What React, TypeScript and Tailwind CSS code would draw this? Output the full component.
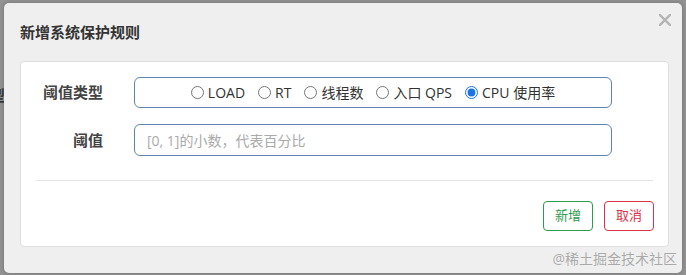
import React, { useState } from 'react';

const options = ['LOAD', 'RT', '线程数', '入口 QPS', 'CPU 使用率'];

export default function App() {
  const [grade, setGrade] = useState(4);

  return (
    <div
      className="relative w-[686px] h-[275px] overflow-hidden bg-[#939393] pt-[3px] px-[4px]"
      style={{ fontFamily: '"Open Sans", "Noto Sans CJK SC", sans-serif' }}
    >
      {/* page text behind the backdrop */}
      <span className="absolute left-[-10px] top-[84px] text-[15px] font-bold text-[#3a3a3a]">型</span>

      {/* Modal */}
      <div className="relative h-[270px] rounded-[5px] bg-[#efefef] shadow-[0_0_4px_rgba(0,0,0,0.25)]">
        <div className="h-[58px] flex items-center pl-4">
          <h4 className="text-[15px] font-bold text-[#333]">新增系统保护规则</h4>
        </div>
        <button className="absolute right-[10px] top-[10px] w-[14px] h-[14px] flex items-center justify-center" aria-label="Close">
          <svg width="12" height="12" viewBox="0 0 12 12">
            <path d="M1 1 L11 11 M11 1 L1 11" stroke="#b3b3b3" strokeWidth="2.4" strokeLinecap="square" />
          </svg>
        </button>

        {/* Body panel */}
        <div className="ml-4 mr-[13px] h-[186px] rounded-[4px] bg-white border border-[#dedede] pt-[15px]">
          <div className="flex items-center h-[31px]">
            <label className="w-[82px] text-right text-[15px] font-bold text-[#444]">阈值类型</label>
            <div className="ml-[31px] w-[478px] h-[31px] rounded-[6px] border border-[#5b86b1] flex items-center justify-center gap-[13px] text-[14px] text-[#333]">
              {options.map((opt, i) => (
                <label key={opt} className="flex items-center gap-[4px] cursor-pointer">
                  <input
                    type="radio"
                    name="grade"
                    checked={grade === i}
                    onChange={() => setGrade(i)}
                    className="w-[13px] h-[13px] m-0 accent-[#1a73e8]"
                  />
                  <span>{opt}</span>
                </label>
              ))}
            </div>
          </div>

          <div className="flex items-center h-[32px] mt-[16px]">
            <label className="w-[82px] text-right text-[15px] font-bold text-[#444]">阈值</label>
            <input
              type="text"
              placeholder="[0, 1]的小数，代表百分比"
              className="ml-[31px] w-[478px] h-[32px] rounded-[6px] border border-[#5b86b1] px-[12px] text-[14px] text-[#333] placeholder:text-[#aaa] outline-none"
            />
          </div>

          <div className="mx-[15px] mt-[24px] h-px bg-[#e5e5e5]" />

          <div className="flex justify-end gap-[11px] mt-[20px] pr-[14px]">
            <button className="w-[50px] h-[30px] rounded-[4px] border border-[#2e9a4e] text-[13px] text-[#2e9a4e] bg-white">新增</button>
            <button className="w-[50px] h-[30px] rounded-[4px] border border-[#d9344a] text-[13px] text-[#d9344a] bg-white">取消</button>
          </div>
        </div>

        {/* watermark */}
        <span className="absolute right-[5px] bottom-[4px] text-[14px] text-[#a9a9a9] [text-shadow:0_0_1px_#fff]">
          @稀土掘金技术社区
        </span>
      </div>
    </div>
  );
}
